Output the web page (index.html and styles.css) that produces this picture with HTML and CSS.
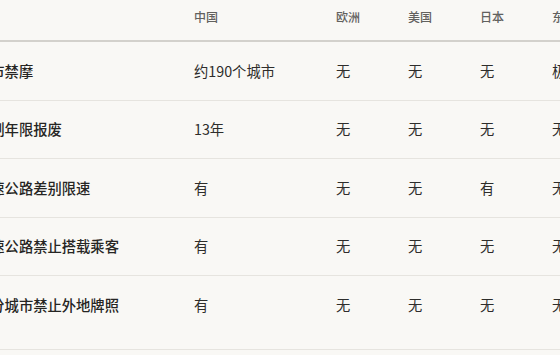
FILE: index.html
```html
<!DOCTYPE html>
<html lang="zh">
<head>
<meta charset="utf-8">
<link rel="stylesheet" href="styles.css">
</head>
<body>
<div class="wrap">
<table class="cmp">
  <colgroup>
    <col class="c-item"><col class="c-cn"><col class="c-x"><col class="c-x"><col class="c-x"><col class="c-last">
  </colgroup>
  <thead>
    <tr><th></th><th>中国</th><th>欧洲</th><th>美国</th><th>日本</th><th>东南亚</th></tr>
  </thead>
  <tbody>
    <tr><td>城市禁摩</td><td>约190个城市</td><td>无</td><td>无</td><td>无</td><td>极少</td></tr>
    <tr><td>强制年限报废</td><td>13年</td><td>无</td><td>无</td><td>无</td><td>无</td></tr>
    <tr><td>高速公路差别限速</td><td>有</td><td>无</td><td>无</td><td>有</td><td>无</td></tr>
    <tr><td>高速公路禁止搭载乘客</td><td>有</td><td>无</td><td>无</td><td>无</td><td>无</td></tr>
    <tr class="last"><td>部分城市禁止外地牌照</td><td>有</td><td>无</td><td>无</td><td>无</td><td>无</td></tr>
  </tbody>
</table>
</div>
</body>
</html>
```
FILE: styles.css
```css
html, body {
  margin: 0;
  padding: 0;
  background: #f9f8f5;
  overflow: hidden;
}
.wrap {
  margin-left: -24px;
  width: 720px;
}
.cmp {
  border-collapse: collapse;
  table-layout: fixed;
  width: 720px;
  font-family: "Noto Sans CJK SC", "Noto Sans", sans-serif;
  color: #2e2d2b;
}
.c-item { width: 218px; }
.c-cn { width: 142px; }
.c-x { width: 72px; }
.c-last { width: 144px; }
.cmp th {
  text-align: left;
  font-weight: 500;
  font-size: 12px;
  line-height: 16px;
  color: #62615e;
  padding: 9px 0 15px;
  border-bottom: 2px solid #d3d1cc;
}
.cmp td {
  text-align: left;
  font-size: 14.3px;
  line-height: 14px;
  padding: 21.5px 0 22px;
  border-bottom: 1px solid #e6e4df;
  white-space: nowrap;
  overflow: hidden;
}
.cmp td:first-child {
  font-weight: 500;
  color: #262523;
}
.cmp tr.last td {
  padding-bottom: 37px;
}
```
